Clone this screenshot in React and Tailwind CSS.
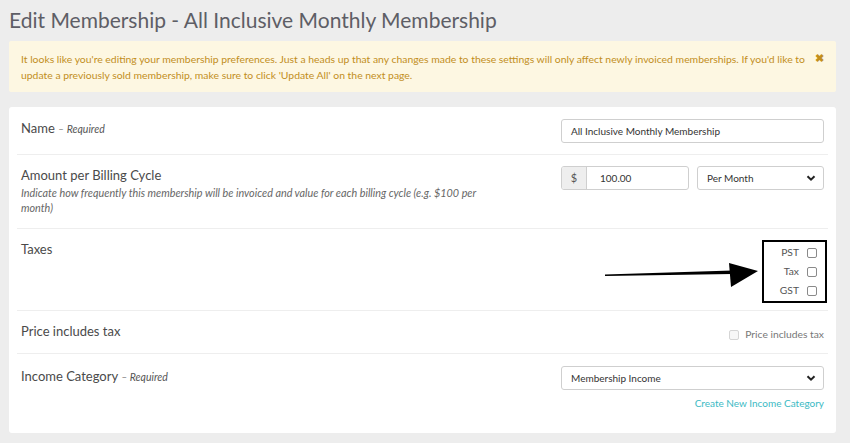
import React from "react";

const Chevron = () => (
  <svg width="10" height="10" viewBox="0 0 10 10" className="shrink-0">
    <path d="M1.5 3.2 L5 6.7 L8.5 3.2" fill="none" stroke="#222" strokeWidth="2" />
  </svg>
);

const Box = ({ className = "" }) => (
  <span className={`inline-block w-[10px] h-[10px] rounded-[2px] border border-[#8a8a8a] bg-white ${className}`} />
);

export default function App() {
  return (
    <div className="w-[850px] h-[443px] bg-[#ededed] overflow-hidden text-[#4a4a4a]" style={{ fontFamily: 'Lato, "Liberation Sans", sans-serif' }}>
      <div className="pl-[9px] pr-[14px]">
        <h1 className="pt-[7px] h-[41px] text-[21px] leading-[26px] text-[#5e5e66] font-normal">
          Edit Membership - All Inclusive Monthly Membership
        </h1>
        <div className="h-[51px] bg-[#fdf7e2] rounded-[2px] flex items-start pl-[12px] pr-[12px] pt-[10px]">
          <p className="flex-1 text-[10.4px] leading-[16px] text-[#c28e1c]">
            It looks like you're editing your membership preferences. Just a heads up that any changes made to these settings will only affect newly invoiced memberships. If you'd like to update a previously sold membership, make sure to click 'Update All' on the next page.
          </p>
          <span className="text-[#c28e1c] text-[11px] leading-[14px] font-bold ml-[6px]">✖</span>
        </div>
        <div className="mt-[15px] h-[326px] bg-white rounded-[3px] px-[8px]">
          {/* Name */}
          <div className="h-[48px] flex items-start justify-between px-[4px] border-b border-[#eeeeee]">
            <div className="pt-[12px] text-[13px] leading-[18px]">
              Name <span className="italic text-[10.5px] text-[#555]">– Required</span>
            </div>
            <div className="pt-[12px]">
              <div className="w-[263px] h-[24px] border border-[#cfcfcf] rounded-[3px] flex items-center px-[9px] text-[10px] text-[#333]">
                All Inclusive Monthly Membership
              </div>
            </div>
          </div>
          {/* Amount */}
          <div className="h-[74px] flex items-start justify-between px-[4px] border-b border-[#eeeeee]">
            <div className="pt-[11px] w-[470px]">
              <div className="text-[13px] leading-[18px]">Amount per Billing Cycle</div>
              <div className="italic text-[10.8px] leading-[15px] text-[#666] mt-[1px]">
                Indicate how frequently this membership will be invoiced and value for each billing cycle (e.g. $100 per month)
              </div>
            </div>
            <div className="pt-[11px] flex gap-[8px]">
              <div className="flex h-[24px] w-[128px] border border-[#cfcfcf] rounded-[3px] overflow-hidden">
                <div className="w-[25px] bg-[#eeeeee] border-r border-[#cfcfcf] flex items-center justify-center text-[11px] text-[#555]">$</div>
                <div className="flex-1 flex items-center pl-[13px] text-[10px] text-[#333]">100.00</div>
              </div>
              <div className="h-[24px] w-[127px] border border-[#cfcfcf] rounded-[3px] flex items-center justify-between pl-[9px] pr-[7px] text-[10px] text-[#333]">
                Per Month <Chevron />
              </div>
            </div>
          </div>
          {/* Taxes */}
          <div className="relative h-[82px] flex items-start justify-between px-[4px] border-b border-[#eeeeee]">
            <div className="pt-[11px] text-[13px] leading-[18px]">Taxes</div>
            <svg className="absolute left-[588px] top-[30px]" width="160" height="30" viewBox="0 0 160 30">
              <path d="M0 15.5 L127 11.5 L127 15 L0 17 Z" fill="#000" />
              <path d="M124 4 L153 12 L126 28 Z" fill="#000" />
            </svg>
            <div className="mt-[11px] mr-[-3px] w-[65px] h-[63px] border-2 border-black flex flex-col items-end pr-[8px] pt-[4px] gap-[5px]">
              {["PST", "Tax", "GST"].map((t) => (
                <div key={t} className="flex items-center gap-[8px] h-[14px] text-[10.3px] text-[#555]">
                  {t} <Box />
                </div>
              ))}
            </div>
          </div>
          {/* Price includes tax */}
          <div className="h-[43px] flex items-start justify-between px-[4px] border-b border-[#eeeeee]">
            <div className="pt-[11px] text-[13px] leading-[18px]">Price includes tax</div>
            <div className="pt-[16px] flex items-center gap-[6px] text-[10.3px] text-[#777]">
              <span className="inline-block w-[10px] h-[10px] rounded-[2px] border border-[#d5d5d5] bg-[#f7f7f7]" />
              Price includes tax
            </div>
          </div>
          {/* Income Category */}
          <div className="flex items-start justify-between px-[4px]">
            <div className="pt-[13px] text-[13px] leading-[18px]">
              Income Category <span className="italic text-[10.5px] text-[#555]">– Required</span>
            </div>
            <div className="pt-[12px] flex flex-col items-end">
              <div className="w-[263px] h-[24px] border border-[#cfcfcf] rounded-[3px] flex items-center justify-between pl-[9px] pr-[7px] text-[10px] text-[#333]">
                Membership Income <Chevron />
              </div>
              <a className="mt-[6px] text-[10px] leading-[14px] text-[#3bbac4]">Create New Income Category</a>
            </div>
          </div>
        </div>
      </div>
    </div>
  );
}
